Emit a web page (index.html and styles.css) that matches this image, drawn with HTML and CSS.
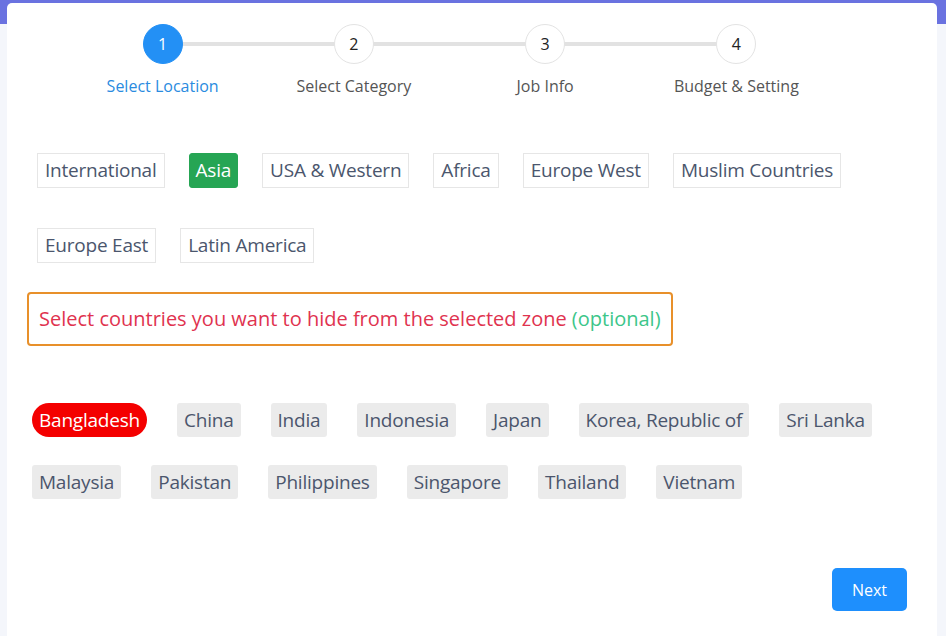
FILE: index.html
```html
<!DOCTYPE html>
<html>
<head>
<meta charset="utf-8">
<link rel="stylesheet" href="styles.css">
</head>
<body>
<div class="band"></div>
<div class="card">
  <div class="stepper">
    <div class="step active">
      <div class="circle">1</div>
      <div class="label">Select Location</div>
    </div>
    <div class="step">
      <div class="circle">2</div>
      <div class="label">Select Category</div>
    </div>
    <div class="step">
      <div class="circle">3</div>
      <div class="label">Job Info</div>
    </div>
    <div class="step last">
      <div class="circle">4</div>
      <div class="label">Budget &amp; Setting</div>
    </div>
  </div>

  <div class="zones">
    <span class="zone">International</span>
    <span class="zone selected">Asia</span>
    <span class="zone">USA &amp; Western</span>
    <span class="zone">Africa</span>
    <span class="zone">Europe West</span>
    <span class="zone">Muslim Countries</span>
    <span class="zone">Europe East</span>
    <span class="zone">Latin America</span>
  </div>

  <div class="notice">Select countries you want to hide from the selected zone <span class="optional">(optional)</span></div>

  <div class="countries">
    <span class="country hidden">Bangladesh</span>
    <span class="country">China</span>
    <span class="country">India</span>
    <span class="country">Indonesia</span>
    <span class="country">Japan</span>
    <span class="country">Korea, Republic of</span>
    <span class="country">Sri Lanka</span>
    <span class="country">Malaysia</span>
    <span class="country">Pakistan</span>
    <span class="country">Philippines</span>
    <span class="country">Singapore</span>
    <span class="country">Thailand</span>
    <span class="country">Vietnam</span>
  </div>

  <div class="actions">
    <button class="next">Next</button>
  </div>
</div>
</body>
</html>
```
FILE: styles.css
```css
* { box-sizing: border-box; }
html, body { margin: 0; padding: 0; }
body {
  width: 946px;
  height: 636px;
  overflow: hidden;
  background: #f4f6fb;
  font-family: "Open Sans", "Noto Sans", sans-serif;
  position: relative;
}
.band {
  height: 24px;
  background: #6a72e0;
}
.card {
  position: absolute;
  top: 3px;
  left: 7px;
  width: 930px;
  height: 660px;
  background: #fff;
  border-radius: 5px;
}
.stepper {
  display: flex;
  margin: 21px 0 0 60px;
  width: 765px;
}
.step {
  flex: 1;
  display: flex;
  flex-direction: column;
  align-items: center;
  position: relative;
}
.step::after {
  content: "";
  position: absolute;
  top: 18px;
  left: 50%;
  width: 100%;
  height: 4px;
  background: #e2e2e2;
  z-index: 0;
}
.step.last::after { display: none; }
.circle {
  width: 40px;
  height: 40px;
  border-radius: 50%;
  border: 1px solid #e3e3e3;
  background: #fff;
  display: flex;
  align-items: center;
  justify-content: center;
  font-size: 16px;
  color: #222;
  position: relative;
  z-index: 1;
}
.step.active .circle {
  background: #2390f5;
  border-color: #2390f5;
  color: #fff;
}
.label {
  margin-top: 11px;
  font-size: 16px;
  color: #555;
  line-height: 22px;
}
.step.active .label { color: #2a8be0; }

.zones {
  display: flex;
  flex-wrap: wrap;
  gap: 40px 24px;
  margin: 56px 0 0 30px;
  width: 840px;
}
.zone {
  display: inline-block;
  height: 35px;
  line-height: 33px;
  padding: 0 7px;
  border: 1px solid #e6e6e6;
  font-size: 19px;
  letter-spacing: -0.22px;
  color: #4b566d;
}
.zone.selected {
  background: #26a554;
  border-color: #26a554;
  color: #fff;
  border-radius: 3px;
  padding: 0 6px;
}
.notice {
  margin: 29px 0 0 20px;
  width: 646px;
  height: 54px;
  border: 2px solid #e8902a;
  border-radius: 4px;
  padding: 0 10px;
  line-height: 50px;
  font-size: 20px;
  color: #e0334f;
}
.optional { color: #3cc68a; }
.countries {
  display: flex;
  flex-wrap: wrap;
  gap: 28px 30px;
  margin: 57px 0 0 25px;
  width: 880px;
}
.country {
  display: inline-block;
  height: 34px;
  line-height: 34px;
  padding: 0 7px;
  background: #ebebeb;
  border-radius: 3px;
  font-size: 19px;
  letter-spacing: -0.22px;
  color: #4b566d;
}
.country.hidden {
  background: #f40000;
  color: #fff;
  border-radius: 17px;
}
.actions {
  display: flex;
  justify-content: flex-end;
  margin: 69px 30px 0 0;
}
.next {
  width: 75px;
  height: 43px;
  background: #1e8ffd;
  border: none;
  border-radius: 5px;
  color: #fff;
  font-family: "Open Sans", "Noto Sans", sans-serif;
  font-size: 16px;
}
```
